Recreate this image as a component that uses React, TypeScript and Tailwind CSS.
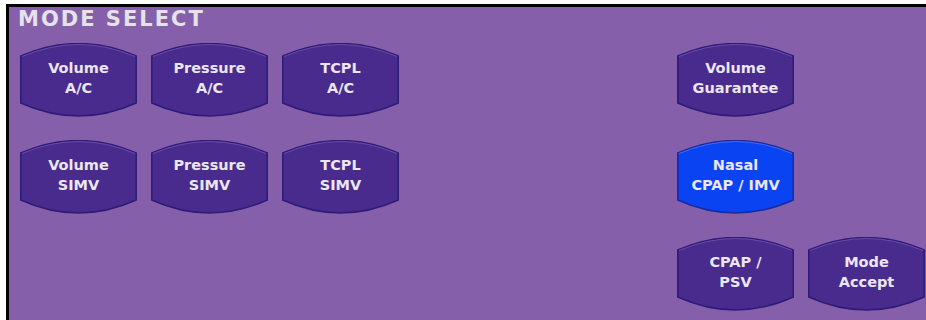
import React from 'react';

type Mode = {
  label: [string, string];
  col: string;
  row: string;
  active?: boolean;
};

const modes: Mode[] = [
  { label: ['Volume', 'A/C'], col: 'col-start-1', row: 'row-start-1' },
  { label: ['Pressure', 'A/C'], col: 'col-start-2', row: 'row-start-1' },
  { label: ['TCPL', 'A/C'], col: 'col-start-3', row: 'row-start-1' },
  { label: ['Volume', 'Guarantee'], col: 'col-start-5', row: 'row-start-1' },
  { label: ['Volume', 'SIMV'], col: 'col-start-1', row: 'row-start-2' },
  { label: ['Pressure', 'SIMV'], col: 'col-start-2', row: 'row-start-2' },
  { label: ['TCPL', 'SIMV'], col: 'col-start-3', row: 'row-start-2' },
  { label: ['Nasal', 'CPAP / IMV'], col: 'col-start-5', row: 'row-start-2', active: true },
  { label: ['CPAP /', 'PSV'], col: 'col-start-5', row: 'row-start-3' },
  { label: ['Mode', 'Accept'], col: 'col-start-6', row: 'row-start-3' },
];

function ModeButton({ mode }: { mode: Mode }) {
  const fill = mode.active ? '#0a44f2' : '#482b8c';
  const edge = mode.active ? '#1a2a9c' : '#2e1b78';
  return (
    <button
      type="button"
      className={`relative h-[74px] w-[117px] ${mode.col} ${mode.row}`}
    >
      <svg className="absolute inset-0 h-full w-full" viewBox="0 0 117 74" preserveAspectRatio="none">
        <path d="M0.75,13 Q58.5,-12 116.25,13 L116.25,60 Q58.5,86 0.75,60 Z" fill={fill} stroke={edge} strokeWidth="1.5" />
        <path d="M2,13.5 Q58.5,-10.5 115,13.5" fill="none" stroke={mode.active ? '#3f6cff' : '#6a4ca6'} strokeWidth="1" />
      </svg>
      <span className="relative flex h-full flex-col items-center justify-center pb-[5px] font-['DejaVu_Sans',sans-serif] text-[14.5px] font-bold leading-[20px] text-[#ebe6f2]">
        <span>{mode.label[0]}</span>
        <span>{mode.label[1]}</span>
      </span>
    </button>
  );
}

export default function App() {
  return (
    <div className="h-[320px] w-[926px] overflow-hidden bg-white pl-[6px] pt-[4px]">
      <div className="h-full border-l-[3px] border-t-[3px] border-black bg-[#865fab] pl-[9px]">
        <h1 className="font-['DejaVu_Sans',sans-serif] text-[21px] font-bold leading-[25px] tracking-[2px] text-[#e4e3ea]">
          MODE SELECT
        </h1>
        <div className="ml-[2px] mt-[11px] grid grid-cols-[117px_117px_117px_250px_117px_117px] grid-rows-[74px_74px_74px] gap-x-[14px] gap-y-[23px]">
          {modes.map((mode) => (
            <ModeButton key={mode.label.join(' ')} mode={mode} />
          ))}
        </div>
      </div>
    </div>
  );
}
